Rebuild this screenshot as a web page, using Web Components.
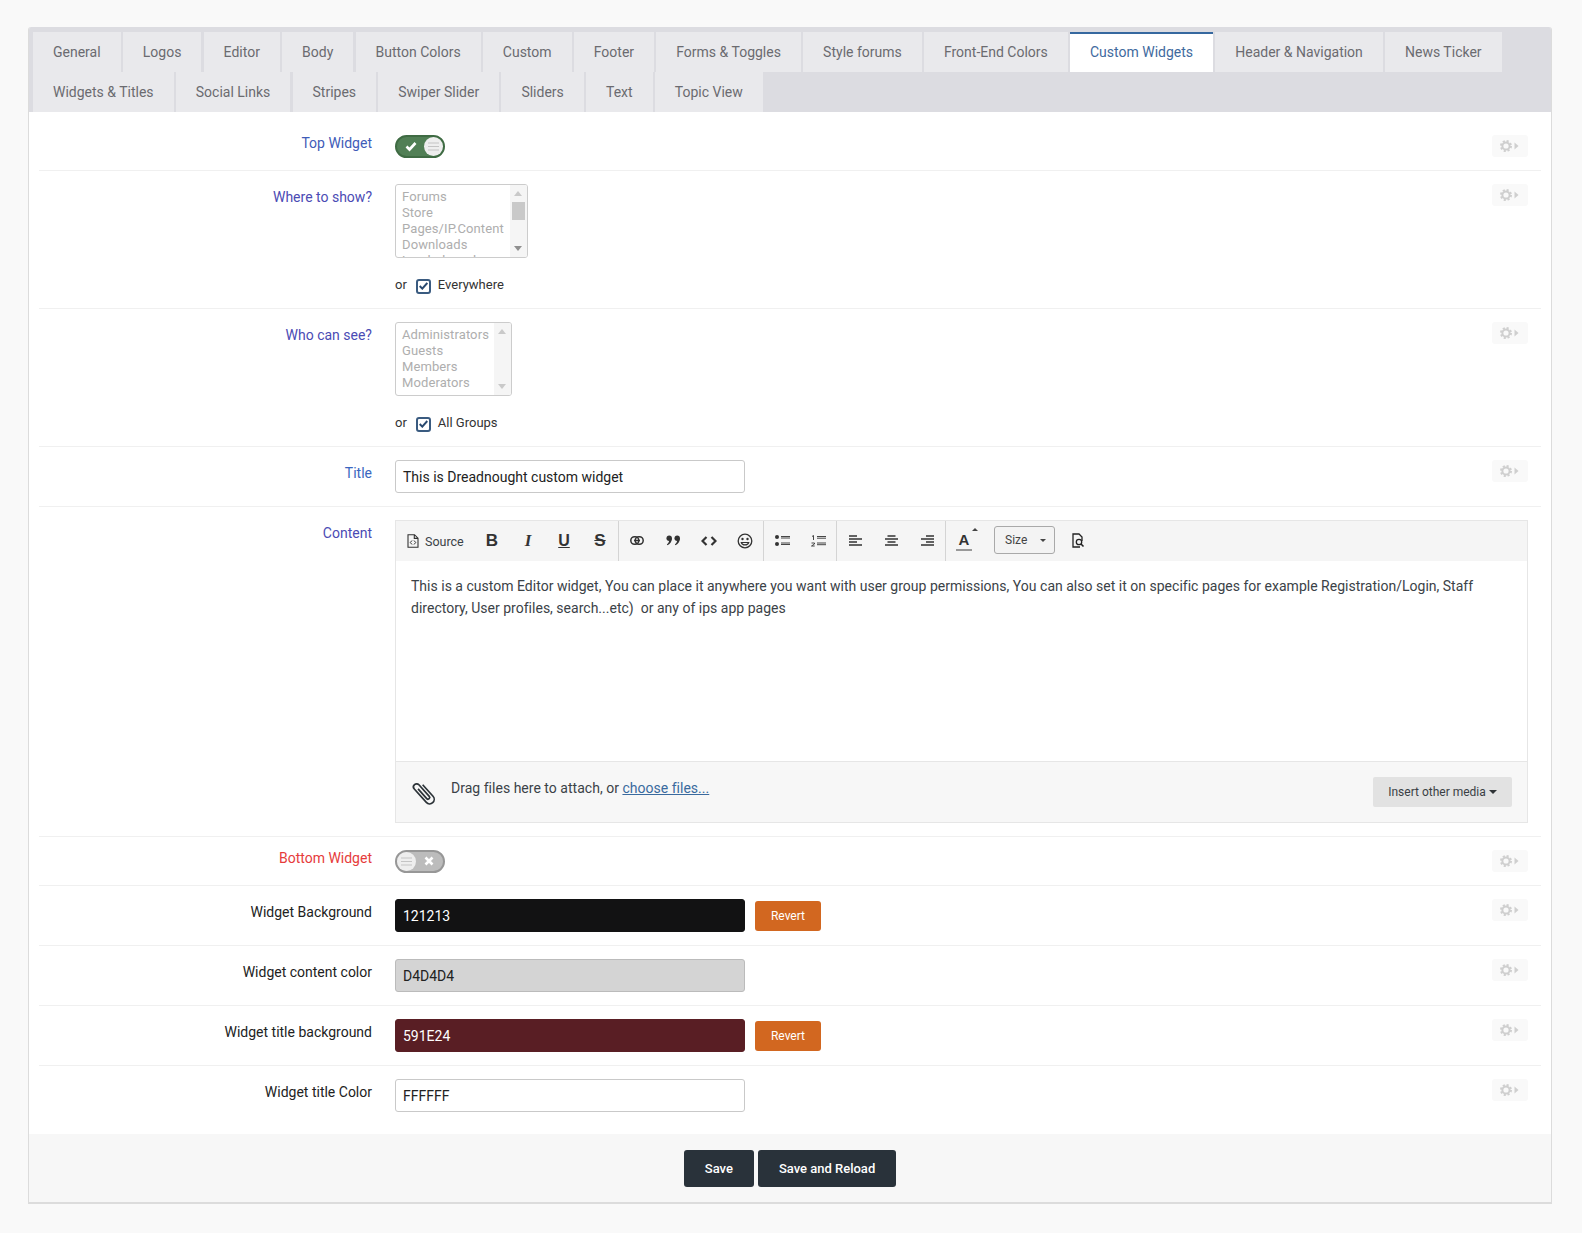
<!DOCTYPE html>
<html><head><meta charset="utf-8"><title>Custom Widgets</title>
<style>
html,body{margin:0;padding:0}
body{background:#f9f9f9;font-family:Roboto,"Liberation Sans",sans-serif;font-size:14px;color:#222}
</style></head><body>
<template id="t-panel"><style>
:host{display:block;box-sizing:border-box;margin:27px 30px 30px 28px;background:#fff;border:1px solid #dcdcdc;border-bottom-width:2px;border-top:0;border-radius:3px 3px 0 0;overflow:hidden}
.rows{display:block;padding:0 10px}
</style><slot name="tabs"></slot><div class="rows"><slot></slot></div><slot name="foot"></slot></template>

<template id="t-tabs"><style>
:host{display:flex;flex-wrap:wrap;background:#dcdce1;padding:5px 0 0 4px;height:85px;box-sizing:border-box;align-content:flex-start}
</style><slot></slot></template>

<template id="t-tab"><style>
:host{display:block;box-sizing:border-box;height:40px;padding:0 20px;line-height:41px;background:#e9e9ec;color:#6b6b70;margin-right:2.200px;font-size:14px;white-space:nowrap}
:host([active]){background:#fff;color:#3f6a9e;border-top:2px solid #36689f;line-height:37px}
</style><slot></slot></template>

<template id="t-row"><style>
:host{display:flex;box-sizing:border-box;padding:13px 13px 14px 0;border-bottom:1px solid #f0f0f0;align-items:flex-start}
:host([last]){border-bottom:0}
:host([first]){padding-top:23px;padding-bottom:12px}
:host([field]){padding-bottom:13px}
:host([tight]){padding-bottom:12px}
.l{width:333px;text-align:right;font-size:14px;line-height:20px;margin-top:3px;flex:none}
:host([first]) .l,:host([tight]) .l{margin-top:-2px}
.c{flex:1;margin-left:23px;min-width:0}
</style><div class="l"><slot name="label"></slot></div><div class="c"><slot></slot></div><slot name="gear"></slot></template>

<template id="t-gear"><style>
:host{display:flex;align-items:center;justify-content:center;width:36px;height:22px;background:#f9f9f9;border-radius:3px;flex:none}
</style><svg width="20" height="12" viewBox="0 0 20 12"><circle cx="6" cy="6" r="3.600" fill="none" stroke="#cfcfcf" stroke-width="2"/><circle cx="6" cy="6" r="5" fill="none" stroke="#cfcfcf" stroke-width="2" stroke-dasharray="2.100 1.830"/><path d="M14.500 2.500l4 3.500-4 3.500z" fill="#cfcfcf"/></svg></template>

<template id="t-toggle"><style>
:host{display:block;box-sizing:border-box;width:50px;height:23px;border-radius:12px;border:2px solid #3f6b43;background:#517f55;position:relative}
:host([off]){background:#bcbcbc;border-color:#979797}
.k{position:absolute;top:0;right:0;width:19px;height:19px;border-radius:50%;background:#eee;display:flex;align-items:center;justify-content:center}
:host([off]) .k{left:0;right:auto}
.m{position:absolute;top:3px;left:8px}
:host([off]) .m{left:26px}
</style><svg class="m" width="13" height="13" viewBox="0 0 13 13"><path class="p" d="" fill="none" stroke="#fff" stroke-width="2.600"/></svg><div class="k"><svg width="11" height="9" viewBox="0 0 11 9"><path d="M0 1h11M0 4.500h11M0 8h11" stroke="#c4c4c4" stroke-width="1"/></svg></div></template>

<template id="t-list"><style>
:host{display:flex;box-sizing:border-box;border:1px solid #ccc;border-radius:3px;height:74px;overflow:hidden;background:#fff;color:#aeaeae;font-size:13px;line-height:16px;letter-spacing:.1px}
.o{padding:4px 6px 0 6px;white-space:nowrap;overflow:hidden;flex:1}
.s{width:17px;background:#f5f5f5;position:relative;flex:none}
.u,.d{position:absolute;left:4px;width:0;height:0;border-left:4px solid transparent;border-right:4px solid transparent}
.u{top:6px;border-bottom:5px solid #c9c9c9}
.d{bottom:6px;border-top:5px solid #c9c9c9}
:host([active]) .d{border-top-color:#8f8f8f}
.t{display:none;position:absolute;left:2px;right:2px;top:17px;height:18px;background:#c9c9c9}
:host([active]) .t{display:block}
</style><div class="o"><slot></slot></div><div class="s"><i class="u"></i><i class="t"></i><i class="d"></i></div></template>

<template id="t-or"><style>
:host{display:flex;align-items:center;font-size:13px;line-height:18px;margin-top:18px;height:18px;color:#333}
.b{box-sizing:border-box;width:15px;height:15px;border:2px solid #3a5b80;border-radius:3px;margin:2px 7px 0 9px;display:flex;align-items:center;justify-content:center}
</style>or<span class="b"><svg width="9" height="8" viewBox="0 0 9 8"><path d="M.7 4l2.600 2.600L8.300 1" fill="none" stroke="#29496f" stroke-width="2"/></svg></span><span><slot></slot></span></template>

<template id="t-field"><style>
:host{display:flex;align-items:flex-start;gap:10px}
.i{box-sizing:border-box;width:350px;height:33px;border:1px solid #c9c9c9;border-radius:3px;padding:0 7px;line-height:32px;font-size:14px;color:#222;background:#fff;flex:none}
:host([dark]) .i{border-color:#121213;background:#121213;color:#fff}
:host([grey]) .i{background:#d4d4d4;border-color:#bbb;color:#222}
:host([wine]) .i{background:#591e24;border-color:#591e24;color:#fff}
.r{display:none;margin-top:2px;box-sizing:border-box;width:66px;height:30px;background:#d26720;color:#fff;font-size:12px;font-weight:400;line-height:30px;text-align:center;border-radius:3px}
:host([revert]) .r{display:block}
</style><div class="i"><slot></slot></div><div class="r">Revert</div></template>

<template id="t-tb"><style>
:host{display:flex;align-items:center;justify-content:center;width:36px;height:40px;padding-bottom:1px;box-sizing:border-box;flex:none;color:#333}
:host([sep]){width:37px;border-right:1px solid #d4d4d4}
</style><slot></slot></template>

<template id="t-editor"><style>
:host{box-sizing:border-box;border:1px solid #e6e6e6;height:303px;display:flex;flex-direction:column}
.bar{display:flex;height:40px;background:#f5f5f5;flex:none}
.body{height:200px;box-sizing:border-box;padding:14px 15px;line-height:22px;font-size:14px;color:#3b4247;background:#fff;flex:none;letter-spacing:.013px}
.att{flex:1;background:#f7f7f7;border-top:1px solid #e6e6e6;display:flex;align-items:flex-start;padding:0 15px 0 14px;color:#3b4247}
.att .txt{margin:16px 0 0 13px;line-height:20px;flex:1;letter-spacing:.02px}
a{color:#3a6a9e;text-decoration:underline}
.ins{margin-top:15px;box-sizing:border-box;height:30px;width:139px;background:#e2e2e2;border-radius:2px;font-size:12px;line-height:30px;text-align:center;color:#3a3f44}
.ins i{display:inline-block;border-left:4px solid transparent;border-right:4px solid transparent;border-top:4px solid #2f3336;vertical-align:2px;margin-left:3px}
.clip{margin-top:16px}
</style><div class="bar"><slot name="bar"></slot></div><div class="body"><slot></slot></div><div class="att"><svg class="clip" width="28" height="30" viewBox="0 0 28 30"><g transform="rotate(-42 14 15)"><path d="M18.500 8V23.500a4.500 4.500 0 0 1-9 0V5.500a3.100 3.100 0 0 1 6.200 0V21a1.700 1.700 0 0 1-3.400 0V8" fill="none" stroke="#2c3338" stroke-width="1.700"/></g></svg><div class="txt">Drag files here to attach, or <a>choose files...</a></div><div class="ins">Insert other media<i></i></div></div></template>

<template id="t-foot"><style>
:host{display:flex;justify-content:center;gap:4px;background:#f7f7f7;padding:16px 0 15px;margin-top:9px;height:37px}
.b{box-sizing:border-box;height:37px;background:#29323a;color:#fff;border-radius:3px;padding:0 21px;font-size:13px;font-weight:500;line-height:37px}
</style><div class="b">Save</div><div class="b">Save and Reload</div></template>

<template id="t-src"><style>
:host{display:flex;align-items:center;height:40px;width:78px;padding-left:11px;box-sizing:border-box;font-size:12.500px;gap:6px;color:#3b4247;flex:none}
</style><svg width="12" height="14" viewBox="0 0 12 14"><path d="M1 .7h6.500L11 4.200V13.300H1zM7.300.7v3.700H11" fill="none" stroke="#333" stroke-width="1.100"/><path d="M5 6.500L3.300 8.500 5 10.500M7 6.500l1.700 2L7 10.500" fill="none" stroke="#333" stroke-width="1"/></svg><slot></slot></template>

<template id="t-size"><style>
:host{display:flex;align-items:center;box-sizing:border-box;width:61px;height:28px;margin:5px 5px 0 12px;border:1px solid #a9a9a9;border-radius:3px;background:#f3f3f3;font-size:12px;color:#444;padding:0 8px 0 10px;justify-content:space-between;flex:none}
i{border-left:3px solid transparent;border-right:3px solid transparent;border-top:3px solid #444}
</style><slot></slot><i></i></template>

<script>
function def(name,tid,extra){customElements.define(name,class extends HTMLElement{
  constructor(){super();this.attachShadow({mode:"open"}).appendChild(document.getElementById(tid).content.cloneNode(true));}
  connectedCallback(){if(extra)extra(this)}
})}
def("x-panel","t-panel");def("x-tabs","t-tabs");def("x-tab","t-tab");def("x-row","t-row");def("x-gear","t-gear");
def("x-toggle","t-toggle",e=>{e.shadowRoot.querySelector(".p").setAttribute("d",e.hasAttribute("off")?"M2.500 2.500l7 7M9.500 2.500l-7 7":"M1.500 6.500l3 3 6-6.500");});
def("x-list","t-list");def("x-or","t-or");def("x-field","t-field");def("x-tb","t-tb");def("x-editor","t-editor");def("x-foot","t-foot");def("x-src","t-src");def("x-size","t-size");
</script>

<x-panel>
<x-tabs slot="tabs">
<x-tab>General</x-tab><x-tab>Logos</x-tab><x-tab>Editor</x-tab><x-tab>Body</x-tab><x-tab>Button Colors</x-tab><x-tab>Custom</x-tab><x-tab>Footer</x-tab><x-tab>Forms &amp; Toggles</x-tab><x-tab>Style forums</x-tab><x-tab>Front-End Colors</x-tab><x-tab active>Custom Widgets</x-tab><x-tab>Header &amp; Navigation</x-tab><x-tab>News Ticker</x-tab><x-tab>Widgets &amp; Titles</x-tab><x-tab>Social Links</x-tab><x-tab>Stripes</x-tab><x-tab>Swiper Slider</x-tab><x-tab>Sliders</x-tab><x-tab>Text</x-tab><x-tab>Topic View</x-tab>
</x-tabs>

<x-row first><span slot="label" style="color:#3f5cb8">Top Widget</span><x-toggle></x-toggle><x-gear slot="gear"></x-gear></x-row>

<x-row><span slot="label" style="color:#4b4bb4">Where to show?</span>
<x-list active style="width:133px">Forums<br>Store<br>Pages/IP.Content<br>Downloads<br>Leaderboard</x-list>
<x-or>Everywhere</x-or><x-gear slot="gear"></x-gear></x-row>

<x-row><span slot="label" style="color:#4b4bb4">Who can see?</span>
<x-list style="width:117px">Administrators<br>Guests<br>Members<br>Moderators</x-list>
<x-or>All Groups</x-or><x-gear slot="gear"></x-gear></x-row>

<x-row field><span slot="label" style="color:#3a66c0">Title</span><x-field>This is Dreadnought custom widget</x-field><x-gear slot="gear"></x-gear></x-row>

<x-row field><span slot="label" style="color:#4b4bb4">Content</span>
<x-editor>
<x-src slot="bar">Source</x-src>
<x-tb slot="bar"><span style="font:bold 17px 'Liberation Sans',sans-serif">B</span></x-tb>
<x-tb slot="bar"><span style="font:italic bold 17px 'Liberation Serif',serif">I</span></x-tb>
<x-tb slot="bar"><span style="font:bold 16px 'Liberation Sans',sans-serif;text-decoration:underline">U</span></x-tb>
<x-tb slot="bar" sep><span style="font:bold 17px 'Liberation Sans',sans-serif;text-decoration:line-through">S</span></x-tb>
<x-tb slot="bar"><svg width="14" height="9" viewBox="0 0 14 9"><rect x=".8" y=".8" width="8" height="7.400" rx="3.700" fill="none" stroke="#333" stroke-width="1.500"/><rect x="5.200" y=".8" width="8" height="7.400" rx="3.700" fill="none" stroke="#333" stroke-width="1.500"/><path d="M4 4.500h6" stroke="#333" stroke-width="1.500"/></svg></x-tb>
<x-tb slot="bar"><svg width="15" height="11" viewBox="0 0 15 11"><circle cx="3.200" cy="3.200" r="2.700" fill="#333"/><path d="M5.900 3.200c0 3.500-2 6-4.500 7l-.5-1c1.500-1 2.200-2.300 2.200-3.700z" fill="#333"/><circle cx="11.200" cy="3.200" r="2.700" fill="#333"/><path d="M13.900 3.200c0 3.500-2 6-4.500 7l-.5-1c1.500-1 2.200-2.300 2.200-3.700z" fill="#333"/></svg></x-tb>
<x-tb slot="bar"><svg width="16" height="10" viewBox="0 0 16 10"><path d="M5.500 1L1.500 5l4 4M10.500 1l4 4-4 4" fill="none" stroke="#333" stroke-width="2.200"/></svg></x-tb>
<x-tb slot="bar" sep><svg width="16" height="16" viewBox="0 0 16 16"><circle cx="8" cy="8" r="6.800" fill="none" stroke="#333" stroke-width="1.300"/><circle cx="5.500" cy="6" r="1.200" fill="#333"/><circle cx="10.500" cy="6" r="1.200" fill="#333"/><path d="M4.300 9.500c1 3.200 6.400 3.200 7.400 0z" fill="none" stroke="#333" stroke-width="1.200"/></svg></x-tb>
<x-tb slot="bar"><svg width="15" height="11" viewBox="0 0 15 11"><circle cx="2" cy="2" r="2" fill="#333"/><circle cx="2" cy="9" r="2" fill="#333"/><path d="M6 1.500h9M6 3h9M6 8h9M6 9.500h9" stroke="#333" stroke-width=".9"/></svg></x-tb>
<x-tb slot="bar" sep><svg width="15" height="12" viewBox="0 0 15 12"><path d="M1 1.500l1.500-1V5M.5 8h3v1l-3 2h3.200" fill="none" stroke="#333" stroke-width=".9"/><path d="M6 1.500h9M6 3.200h9M6 8h9M6 9.700h9" stroke="#333" stroke-width=".9"/></svg></x-tb>
<x-tb slot="bar"><svg width="13" height="11" viewBox="0 0 13 11"><path d="M0 1h8M0 4h13M0 7h8M0 10h13" stroke="#333" stroke-width="1.500"/></svg></x-tb>
<x-tb slot="bar"><svg width="13" height="11" viewBox="0 0 13 11"><path d="M2.500 1h8M0 4h13M2.500 7h8M0 10h13" stroke="#333" stroke-width="1.500"/></svg></x-tb>
<x-tb slot="bar" sep><svg width="13" height="11" viewBox="0 0 13 11"><path d="M5 1h8M0 4h13M5 7h8M0 10h13" stroke="#333" stroke-width="1.500"/></svg></x-tb>
<x-tb slot="bar"><span style="position:relative;display:block;width:28px;height:22px;text-align:center;font:bold 15px/19px 'Liberation Sans',sans-serif;color:#333"><span style="display:block;margin:0 6px;border-bottom:2px solid #999">A</span><i style="position:absolute;right:0;top:-2px;border-left:3px solid transparent;border-right:3px solid transparent;border-bottom:3px solid #444"></i></span></x-tb>
<x-size slot="bar">Size</x-size>
<x-tb slot="bar"><svg width="14" height="15" viewBox="0 0 14 15"><path d="M9 14H2V1h6l3 3v4" fill="none" stroke="#222" stroke-width="1.300"/><circle cx="8" cy="9" r="2.700" fill="none" stroke="#222" stroke-width="1.300"/><path d="M10 11l2.500 2.500" stroke="#222" stroke-width="1.600"/></svg></x-tb>
This is a custom Editor widget, You can place it anywhere you want with user group permissions, You can also set it on specific pages for example Registration/Login, Staff directory, User profiles, search...etc)&nbsp; or any of ips app pages
</x-editor></x-row>

<x-row tight><span slot="label" style="color:#e63b3b">Bottom Widget</span><x-toggle off></x-toggle><x-gear slot="gear"></x-gear></x-row>
<x-row field><span slot="label">Widget Background</span><x-field dark revert>121213</x-field><x-gear slot="gear"></x-gear></x-row>
<x-row field><span slot="label">Widget content color</span><x-field grey>D4D4D4</x-field><x-gear slot="gear"></x-gear></x-row>
<x-row field><span slot="label">Widget title background</span><x-field wine revert>591E24</x-field><x-gear slot="gear"></x-gear></x-row>
<x-row last field><span slot="label">Widget title Color</span><x-field>FFFFFF</x-field><x-gear slot="gear"></x-gear></x-row>
<x-foot slot="foot"></x-foot>
</x-panel>
</body></html>
